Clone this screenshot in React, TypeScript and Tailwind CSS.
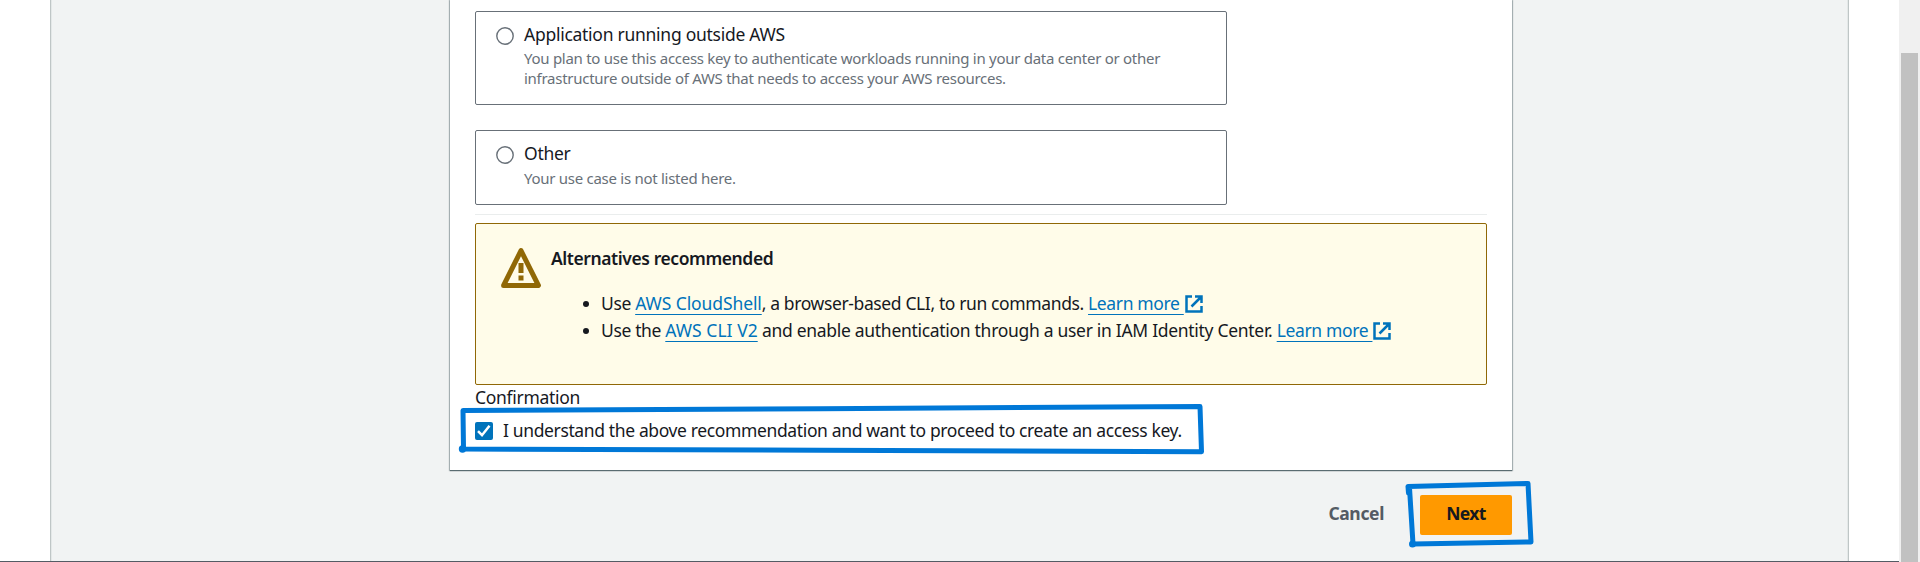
import type { ReactNode } from "react";

function Radio() {
  return (
    <svg className="mt-[6px] -ml-px size-[18px] shrink-0" viewBox="0 0 18 18">
      <circle cx="9" cy="9" r="8.2" fill="#fff" stroke="#687078" strokeWidth="1.4" />
    </svg>
  );
}

function Tile({ title, children }: { title: string; children: ReactNode }) {
  return (
    <div className="flex w-[752px] gap-[10px] rounded-[2px] border border-[#687078] pt-[9px] pl-[21px]">
      <Radio />
      <div>
        <div className="text-[17.5px] leading-[27px] tracking-[-0.27px]">{title}</div>
        <div className="text-[15px] leading-5 tracking-[-0.275px] text-[#687078]">{children}</div>
      </div>
    </div>
  );
}

function WarningIcon() {
  return (
    <svg className="mt-[24px] size-10 shrink-0" viewBox="0 0 40 40" fill="none">
      <path d="M20 2.6 37.4 37.4H2.6Z" stroke="#906806" strokeWidth="5" strokeLinejoin="round" />
      <path d="M20 15v10M20 27.500v5" stroke="#906806" strokeWidth="5" />
    </svg>
  );
}

function ExternalIcon() {
  return (
    <svg className="relative top-[3px] ml-px inline-block h-[18px] w-[18px] align-baseline" viewBox="0 0 18 18" fill="none" stroke="#0073bb" strokeWidth="2.5">
      <path d="M7 1.500H1.500v15h15V11" />
      <path d="M10 1.500h6.500V8M16 2 6.500 11.500" />
    </svg>
  );
}

function Link({ children }: { children: ReactNode }) {
  return <a className="text-[#0073bb] underline decoration-1 underline-offset-[4px] [text-decoration-skip-ink:none]">{children}</a>;
}

function Bullet({ children }: { children: ReactNode }) {
  return (
    <li className="flex items-center gap-[12px]">
      <span className="size-[6px] rounded-full bg-[#16191f]" />
      <span className="whitespace-pre">{children}</span>
    </li>
  );
}

export default function App() {
  return (
    <div className="relative flex h-[562px] w-[1920px] overflow-hidden bg-white font-['Noto_Sans',sans-serif] text-[17.5px] tracking-[-0.36px] text-[#16191f]">
      <div className="flex w-[1899px] flex-col border-b border-[#545b64] pl-[50px]">
        <main className="flex h-full w-[1799px] flex-col border-x border-[#bfc6c6] bg-[#f1f3f3] pl-[399px] shadow-[inset_1px_0_#e4e8e8,inset_-1px_0_#e4e8e8]">
          <section className="flex h-[470px] w-[1062px] flex-col bg-white px-[25px] pt-[11px] shadow-[0_1px_1px_0_rgba(0,28,36,0.5),0_0_1px_1px_rgba(0,28,36,0.25)]">
            <div className="flex h-[94px]">
              <Tile title="Application running outside AWS">
                You plan to use this access key to authenticate workloads running in your data center or other
                <br />
                infrastructure outside of AWS that needs to access your AWS resources.
              </Tile>
            </div>
            <div className="mt-[25px] flex h-[75px]">
              <Tile title="Other">
                <div className="pt-px">Your use case is not listed here.</div>
              </Tile>
            </div>
            <div className="mt-[9px] h-px bg-[#eaeded]" />
            <div className="mt-[8px] flex h-[162px] gap-[10px] rounded-[2px] border border-[#906806] bg-[#fffce9] pl-[25px]">
              <WarningIcon />
              <div className="pt-[21px]">
                <div className="font-semibold leading-[27px] tracking-[-0.42px]">Alternatives recommended</div>
                <ul className="mt-[18px] pl-[32px] leading-[27px]">
                  <Bullet>
                    Use <span className="tracking-[-0.1px]"><Link>AWS CloudShell</Link></span>
                    <span className="tracking-[-0.38px]">, a browser-based CLI, to run commands. </span>
                    <Link>Learn more </Link>
                    <ExternalIcon />
                  </Bullet>
                  <Bullet>
                    Use the <span className="tracking-[0.03px]"><Link>AWS CLI V2</Link></span>
                    <span className="tracking-[-0.3px]"> and enable authentication through a user in IAM Identity Center. </span>
                    <Link>Learn more </Link>
                    <ExternalIcon />
                  </Bullet>
                </ul>
              </div>
            </div>
            <div className="mt-px h-[27px] leading-[22px] tracking-[-0.3px]">Confirmation</div>
            <label className="mt-[4px] flex h-[27px] items-center gap-[10px] leading-[27px]">
              <span className="flex size-[18px] items-center justify-center rounded-[2px] bg-[#0073bb]">
                <svg className="size-[18px]" viewBox="0 0 18 18" fill="none" stroke="#fff" strokeWidth="2.500">
                  <path d="m3 9.200 4 4 7.500-9.500" />
                </svg>
              </span>
              <span className="tracking-[-0.37px]">I understand the above recommendation and want to proceed to create an access key.</span>
            </label>
          </section>
          <div className="mt-[25px] flex h-10 w-[1062px] items-center justify-end gap-[36px] font-bold">
            <span className="pb-[3px] text-[#545b64]">Cancel</span>
            <button className="h-10 w-[92px] rounded-[2px] bg-[#ff9900] pb-[3px] font-bold tracking-[-0.6px]">Next</button>
          </div>
        </main>
      </div>
      <aside className="flex w-[21px] flex-col bg-[#f0f0f0] pl-[2px] pt-[53px]">
        <div className="w-[17px] flex-1 bg-[#c1c1c1]" />
      </aside>
      <svg className="pointer-events-none absolute inset-0" width="1920" height="562" fill="none" stroke="#0078d7" strokeWidth="5" strokeLinecap="round" strokeLinejoin="round">
        <path d="M463.500 448.500 463 410.500 820 408.700 1200 406.500 1201.500 451.700 820 450.300 463 449" />
        <circle cx="462.500" cy="449" r="1.200" />
        <path d="M1408.500 493 1408 486.500 1528 483.500 1531 542 1413 544 1409.500 488" />
        <circle cx="1412.500" cy="544" r="1" />
      </svg>
    </div>
  );
}
